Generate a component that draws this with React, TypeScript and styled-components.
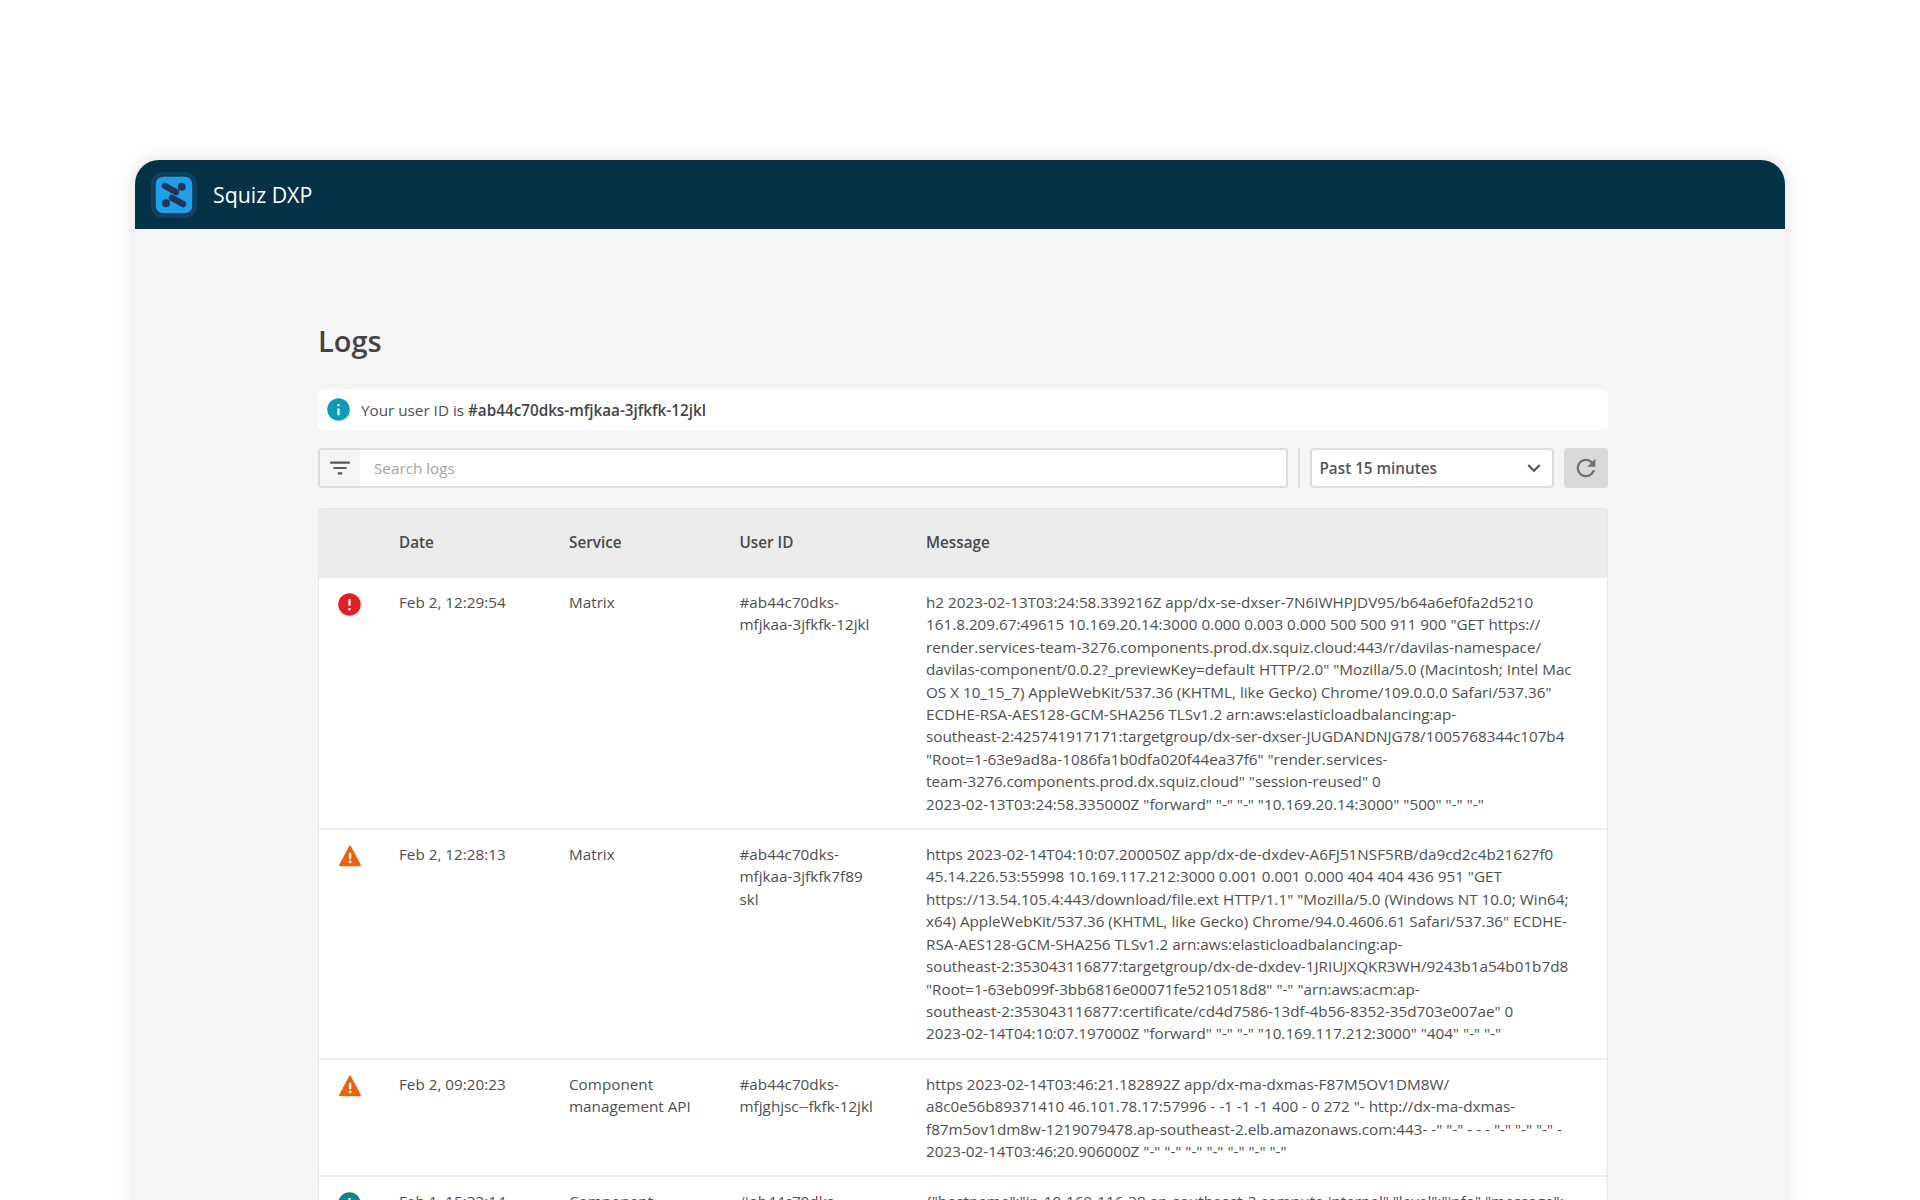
import * as React from 'react'
import styled, { createGlobalStyle } from 'styled-components'
import { MdError, MdExpandMore, MdFilterList, MdInfo, MdRefresh } from 'react-icons/md'

const GlobalStyle = createGlobalStyle`
  html, body {
    margin: 0;
    height: 100%;
    overflow: hidden;
    background: #fff;
    font-family: "Open Sans", "Noto Sans", sans-serif;
    color: #4f4f4f;
  }
`
const Page = styled.div`
  padding: 160px 135px 0 135px;
`
const Window = styled.div`
  border-radius: 24px 24px 0 0;
  background: #f5f5f5;
  box-shadow: 0 0 18px rgba(0, 0, 0, 0.14);
  min-height: 1040px;
`
const TopBar = styled.header`
  height: 69px;
  background: #053247;
  border-radius: 24px 24px 0 0;
  display: flex;
  align-items: center;
  padding-left: 16px;
  gap: 16px;
`
const BrandName = styled.span`
  color: #fff;
  font-size: 21.3px;
`
const Main = styled.main`
  padding: 90px 177.5px 0 183px;
`
const Title = styled.h1`
  margin: 0 0 26px;
  font-size: 29px;
  line-height: 44px;
  font-weight: 600;
  color: #444;
`
const UserNotice = styled.div`
  height: 41px;
  background: #fff;
  border-radius: 5px;
  display: flex;
  align-items: center;
  gap: 9px;
  padding-left: 7px;
  font-size: 15.25px;
  svg {
    color: #0f9bb5;
    flex: none;
  }
  strong {
    font-weight: 600;
    color: #444;
  }
`
const Toolbar = styled.div`
  display: flex;
  align-items: center;
  margin-top: 18px;
  height: 40px;
`
const SearchBox = styled.div`
  flex: 1;
  height: 40px;
  box-sizing: border-box;
  border: 2px solid #dcdcdc;
  border-radius: 4px;
  background: #fff;
  display: flex;
  overflow: hidden;
`
const FilterSlot = styled.div`
  width: 40px;
  background: #f5f5f5;
  display: flex;
  align-items: center;
  justify-content: center;
  color: #555;
`
const SearchText = styled.span`
  font-size: 15.25px;
  color: #a3a3a3;
  line-height: 36px;
  padding-left: 14px;
`
const Divider = styled.div`
  width: 2px;
  height: 40px;
  background: #e2e2e2;
  margin: 0 10px;
`
const RangeSelect = styled.div`
  width: 244px;
  height: 40px;
  box-sizing: border-box;
  border: 2px solid #dcdcdc;
  border-radius: 4px;
  background: #fff;
  display: flex;
  align-items: center;
  justify-content: space-between;
  padding: 0 5px 0 8px;
  font-size: 15.25px;
  font-weight: 600;
  color: #555;
`
const RefreshButton = styled.div`
  width: 44px;
  height: 40px;
  margin-left: 10px;
  border-radius: 4px;
  background: #d9d9d9;
  display: flex;
  align-items: center;
  justify-content: center;
  color: #6f6f6f;
`
const LogTable = styled.div`
  margin-top: 20px;
  border: 1px solid #e6e6e6;
  border-bottom: 0;
  border-radius: 4px 4px 0 0;
  background: #fff;
  font-size: 15.25px;
  line-height: 22.4px;
`
const Row = styled.div<{ $head?: boolean }>`
  display: grid;
  grid-template-columns: 80px 170px 170.5px 186.5px 1fr;
  padding: ${(p) => (p.$head ? '22.3px 0' : '13px 0')};
  background: ${(p) => (p.$head ? '#ececec' : '#fff')};
  border-bottom: 2px solid #ececec;
  font-weight: ${(p) => (p.$head ? 600 : 400)};
  color: ${(p) => (p.$head ? '#484848' : '#4f4f4f')};
`
const Cell = styled.div`
  white-space: pre-line;
`
const StatusCell = styled.div`
  display: flex;
  justify-content: center;
  width: 61px;
`
const Message = styled(Cell)`
  white-space: pre;
`

const LogoMark = () => (
  <svg width="46" height="46" viewBox="0 0 46 46">
    <rect x="0" y="0" width="46" height="46" rx="12" fill="#0f4261" />
    <rect x="4" y="4" width="38" height="38" rx="8" fill="#1ea0e9" stroke="#1d3557" strokeWidth="1.5" />
    <g stroke="#22345a" strokeWidth="6.5" strokeLinecap="round">
      <path d="M14 14 L25 20" />
      <path d="M21 26 L32 32" />
    </g>
    <circle cx="30.7" cy="14.7" r="4" fill="#22345a" />
    <circle cx="15" cy="31.3" r="4" fill="#22345a" />
  </svg>
)

const WarnIcon = () => (
  <svg width="24" height="24" viewBox="0 0 22 22" style={{ marginTop: 1 }}>
    <path d="M11 2.5 L20 19.5 H2 Z" fill="#e8640c" stroke="#e8640c" strokeWidth="2" strokeLinejoin="round" />
    <rect x="10" y="8" width="2.2" height="6" rx="1" fill="#fff" />
    <circle cx="11.1" cy="16.4" r="1.3" fill="#fff" />
  </svg>
)

const statusIcons = {
  error: <MdError size={27} color="#e01f26" />,
  warn: <WarnIcon />,
  info: <MdInfo size={27} color="#0c8391" />,
}

interface LogEntry {
  status: keyof typeof statusIcons
  date: string
  service: string
  user: string
  message: string
}

const logs: LogEntry[] = [
  {
    status: 'error',
    date: 'Feb 2, 12:29:54',
    service: 'Matrix',
    user: '#ab44c70dks-\nmfjkaa-3jfkfk-12jkl',
    message: `h2 2023-02-13T03:24:58.339216Z app/dx-se-dxser-7N6IWHPJDV95/b64a6ef0fa2d5210
161.8.209.67:49615 10.169.20.14:3000 0.000 0.003 0.000 500 500 911 900 "GET https://
render.services-team-3276.components.prod.dx.squiz.cloud:443/r/davilas-namespace/
davilas-component/0.0.2?_previewKey=default HTTP/2.0" "Mozilla/5.0 (Macintosh; Intel Mac
OS X 10_15_7) AppleWebKit/537.36 (KHTML, like Gecko) Chrome/109.0.0.0 Safari/537.36"
ECDHE-RSA-AES128-GCM-SHA256 TLSv1.2 arn:aws:elasticloadbalancing:ap-
southeast-2:425741917171:targetgroup/dx-ser-dxser-JUGDANDNJG78/1005768344c107b4
"Root=1-63e9ad8a-1086fa1b0dfa020f44ea37f6" "render.services-
team-3276.components.prod.dx.squiz.cloud" "session-reused" 0
2023-02-13T03:24:58.335000Z "forward" "-" "-" "10.169.20.14:3000" "500" "-" "-"`,
  },
  {
    status: 'warn',
    date: 'Feb 2, 12:28:13',
    service: 'Matrix',
    user: '#ab44c70dks-\nmfjkaa-3jfkfk7f89\nskl',
    message: `https 2023-02-14T04:10:07.200050Z app/dx-de-dxdev-A6FJ51NSF5RB/da9cd2c4b21627f0
45.14.226.53:55998 10.169.117.212:3000 0.001 0.001 0.000 404 404 436 951 "GET
https://13.54.105.4:443/download/file.ext HTTP/1.1" "Mozilla/5.0 (Windows NT 10.0; Win64;
x64) AppleWebKit/537.36 (KHTML, like Gecko) Chrome/94.0.4606.61 Safari/537.36" ECDHE-
RSA-AES128-GCM-SHA256 TLSv1.2 arn:aws:elasticloadbalancing:ap-
southeast-2:353043116877:targetgroup/dx-de-dxdev-1JRIUJXQKR3WH/9243b1a54b01b7d8
"Root=1-63eb099f-3bb6816e00071fe5210518d8" "-" "arn:aws:acm:ap-
southeast-2:353043116877:certificate/cd4d7586-13df-4b56-8352-35d703e007ae" 0
2023-02-14T04:10:07.197000Z "forward" "-" "-" "10.169.117.212:3000" "404" "-" "-"`,
  },
  {
    status: 'warn',
    date: 'Feb 2, 09:20:23',
    service: 'Component\nmanagement API',
    user: '#ab44c70dks-\nmfjghjsc--fkfk-12jkl',
    message: `https 2023-02-14T03:46:21.182892Z app/dx-ma-dxmas-F87M5OV1DM8W/
a8c0e56b89371410 46.101.78.17:57996 - -1 -1 -1 400 - 0 272 "- http://dx-ma-dxmas-
f87m5ov1dm8w-1219079478.ap-southeast-2.elb.amazonaws.com:443- -" "-" - - - "-" "-" "-" -
2023-02-14T03:46:20.906000Z "-" "-" "-" "-" "-" "-" "-"`,
  },
  {
    status: 'info',
    date: 'Feb 1, 15:32:14',
    service: 'Component\nmanagement API',
    user: '#ab44c70dks-\nmfjkaa-3jfkfk-12jkl',
    message: `{"hostname":"ip-10-169-116-28.ap-southeast-2.compute.internal","level":"info","message":`,
  },
]

export default function App() {
  return (
    <Page>
      <GlobalStyle />
      <Window>
        <TopBar>
          <LogoMark />
          <BrandName>Squiz DXP</BrandName>
        </TopBar>
        <Main>
          <Title>Logs</Title>
          <UserNotice>
            <MdInfo size={27} />
            <span>
              Your user ID is <strong>#ab44c70dks-mfjkaa-3jfkfk-12jkl</strong>
            </span>
          </UserNotice>
          <Toolbar>
            <SearchBox>
              <FilterSlot>
                <MdFilterList size={26} />
              </FilterSlot>
              <SearchText>Search logs</SearchText>
            </SearchBox>
            <Divider />
            <RangeSelect>
              Past 15 minutes
              <MdExpandMore size={26} />
            </RangeSelect>
            <RefreshButton>
              <MdRefresh size={28} />
            </RefreshButton>
          </Toolbar>
          <LogTable>
            <Row $head>
              <span />
              <Cell>Date</Cell>
              <Cell>Service</Cell>
              <Cell>User ID</Cell>
              <Cell>Message</Cell>
            </Row>
            {logs.map((log) => (
              <Row key={log.date}>
                <StatusCell>{statusIcons[log.status]}</StatusCell>
                <Cell>{log.date}</Cell>
                <Cell>{log.service}</Cell>
                <Cell>{log.user}</Cell>
                <Message>{log.message}</Message>
              </Row>
            ))}
          </LogTable>
        </Main>
      </Window>
    </Page>
  )
}
